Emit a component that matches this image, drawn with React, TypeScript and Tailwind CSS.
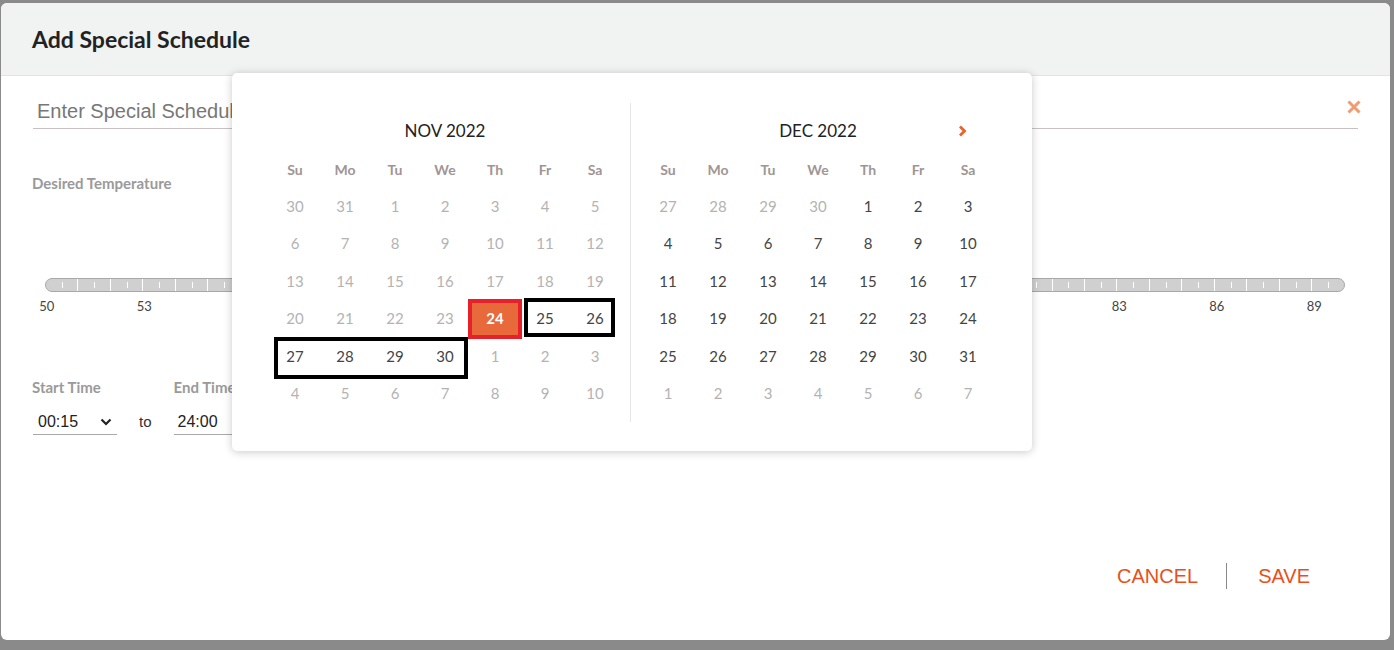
import React from "react";

const LATO = "font-['Lato','Noto_Sans',sans-serif]";
const ARIAL = "font-['Liberation_Sans','Arial',sans-serif]";

type Day = { n: number; dim: boolean; sel?: boolean };

const novDays: Day[] = [
  ...[30, 31].map((n) => ({ n, dim: true })),
  ...Array.from({ length: 30 }, (_, i) => ({ n: i + 1, dim: i + 1 < 24, sel: i + 1 === 24 })),
  ...Array.from({ length: 10 }, (_, i) => ({ n: i + 1, dim: true })),
];

const decDays: Day[] = [
  ...[27, 28, 29, 30].map((n) => ({ n, dim: true })),
  ...Array.from({ length: 31 }, (_, i) => ({ n: i + 1, dim: false })),
  ...Array.from({ length: 7 }, (_, i) => ({ n: i + 1, dim: true })),
];

const WEEK = ["Su", "Mo", "Tu", "We", "Th", "Fr", "Sa"];

function Month({ title, days, next, marks }: { title: string; days: Day[]; next?: boolean; marks?: boolean }) {
  return (
    <div className={`w-[350px] ${LATO}`}>
      <div className="relative h-[56px] flex items-center justify-center text-[17px] text-[#222]">
        {title}
        {next && (
          <svg className="absolute right-[26px] top-[22px]" width="9" height="12" viewBox="0 0 9 12">
            <path d="M2 1.5 L6.5 6 L2 10.5" fill="none" stroke="#e8642c" strokeWidth="2.8" />
          </svg>
        )}
      </div>
      <div className="grid grid-cols-7 h-[20px] items-center text-center text-[14px] font-bold text-[#a09595]">
        {WEEK.map((w) => (
          <div key={w}>{w}</div>
        ))}
      </div>
      <div className="relative mt-[8px] grid grid-cols-7 auto-rows-[37.5px] text-center text-[15px]">
        {days.map((d, i) => (
          <div
            key={i}
            className={`relative flex items-center justify-center ${d.dim ? "text-[#b3b3b3]" : "text-[#444]"}`}
          >
            {d.sel ? (
              <>
                <div className="absolute -left-[2px] -right-[2px] -top-[1px] -bottom-[1.5px] bg-[#e8693a] border-4 border-[#e8202a]" />
                <span className="relative font-bold text-white">{d.n}</span>
              </>
            ) : (
              d.n
            )}
          </div>
        ))}
        {marks && (
          <>
            <div className="absolute left-[254px] top-[110.5px] w-[91px] h-[39px] border-4 border-black" />
            <div className="absolute left-[4px] top-[149.5px] w-[194px] h-[42px] border-4 border-black" />
          </>
        )}
      </div>
    </div>
  );
}

export default function App() {
  const labels = [50, 53, 56, 59, 62, 65, 68, 71, 74, 77, 80, 83, 86, 89];
  return (
    <div className="w-[1394px] h-[650px] bg-[#8a8a8a] pt-[3px] pl-[1px] overflow-hidden">
      <div className="relative w-[1389px] h-[637px] bg-white rounded-[6px] overflow-hidden">
        <div className="h-[73px] bg-[#f1f3f2] border-b border-[#e2e4e3] flex items-center px-[31px]">
          <h1 className={`${LATO} font-bold text-[23px] text-[#222]`}>Add Special Schedule</h1>
        </div>
        <div className="px-[32px]">
          <div className="relative mt-[17px] h-[36px] border-b border-[#c9c1c1]">
            <span className={`${ARIAL} pl-[4px] text-[20px] leading-[37px] text-[#777]`}>Enter Special Schedule Name</span>
            <svg className="absolute right-[-3px] top-[7px]" width="14" height="14" viewBox="0 0 14 14">
              <path d="M1.5 1.5 L12.5 12.5 M12.5 1.5 L1.5 12.5" stroke="#f29a72" strokeWidth="3" />
            </svg>
          </div>
          <div className={`${LATO} mt-[45px] text-[15px] leading-[18px] font-bold text-[#9a9a9a] -ml-[1px]`}>Desired Temperature</div>
          <div className="mt-[86px] ml-[12px] mr-[13px] h-[14px] rounded-full bg-[#d0d0d0] border border-[#a8a8a8] flex overflow-hidden">
            {Array.from({ length: 40 }, (_, i) => (
              <div key={i} className="flex-1 relative border-r border-white last:border-r-0">
                <div className="absolute left-1/2 top-[3px] bottom-[3px] w-px bg-white" />
              </div>
            ))}
          </div>
          <div className={`${LATO} mt-[6px] ml-[-35px] w-[1365px] grid grid-cols-14 text-center text-[13px] leading-[16px] text-[#444]`}>
            {labels.map((l) => (
              <div key={l}>{l}</div>
            ))}
          </div>
          <div className="mt-[64px] flex items-start">
            <div className="w-[84px]">
              <div className={`${LATO} text-[15px] leading-[18px] font-bold text-[#9a9a9a] -ml-[1px]`}>Start Time</div>
              <div className={`${ARIAL} mt-[14px] h-[25px] border-b border-[#a9a9a9] flex items-center justify-between pl-[5px] pr-[5px] text-[16px] text-[#222]`}>
                <span>00:15</span>
                <svg width="12" height="8" viewBox="0 0 12 8">
                  <path d="M1.5 1.5 L6 6 L10.5 1.5" fill="none" stroke="#222" strokeWidth="2.2" />
                </svg>
              </div>
            </div>
            <div className={`${ARIAL} mt-[32px] ml-[22px] h-[25px] flex items-center text-[15px] text-[#333]`}>to</div>
            <div className="ml-[22px] w-[84px]">
              <div className={`${LATO} text-[15px] leading-[18px] font-bold text-[#9a9a9a]`}>End Time</div>
              <div className={`${ARIAL} mt-[14px] h-[25px] border-b border-[#a9a9a9] flex items-center pl-[4px] text-[16px] text-[#222]`}>
                <span>24:00</span>
              </div>
            </div>
          </div>
          <div className={`${ARIAL} mt-[126px] mr-[48px] flex items-center justify-end text-[20px] text-[#e84f1c]`}>
            <span>CANCEL</span>
            <div className="ml-[28px] mr-[31px] w-px h-[26px] bg-[#8a8a8a]" />
            <span>SAVE</span>
          </div>
        </div>

        <div className="absolute left-[231px] top-[70px] w-[800px] h-[378px] bg-white rounded-[5px] shadow-[0_1px_8px_rgba(0,0,0,0.22)] flex pt-[30px] pl-[38px]">
          <Month title="NOV 2022" days={novDays} marks />
          <div className="ml-[10px] w-px h-[319px] bg-[#e6e6e6]" />
          <div className="ml-[12px]">
            <Month title="DEC 2022" days={decDays} next />
          </div>
        </div>
      </div>
    </div>
  );
}
